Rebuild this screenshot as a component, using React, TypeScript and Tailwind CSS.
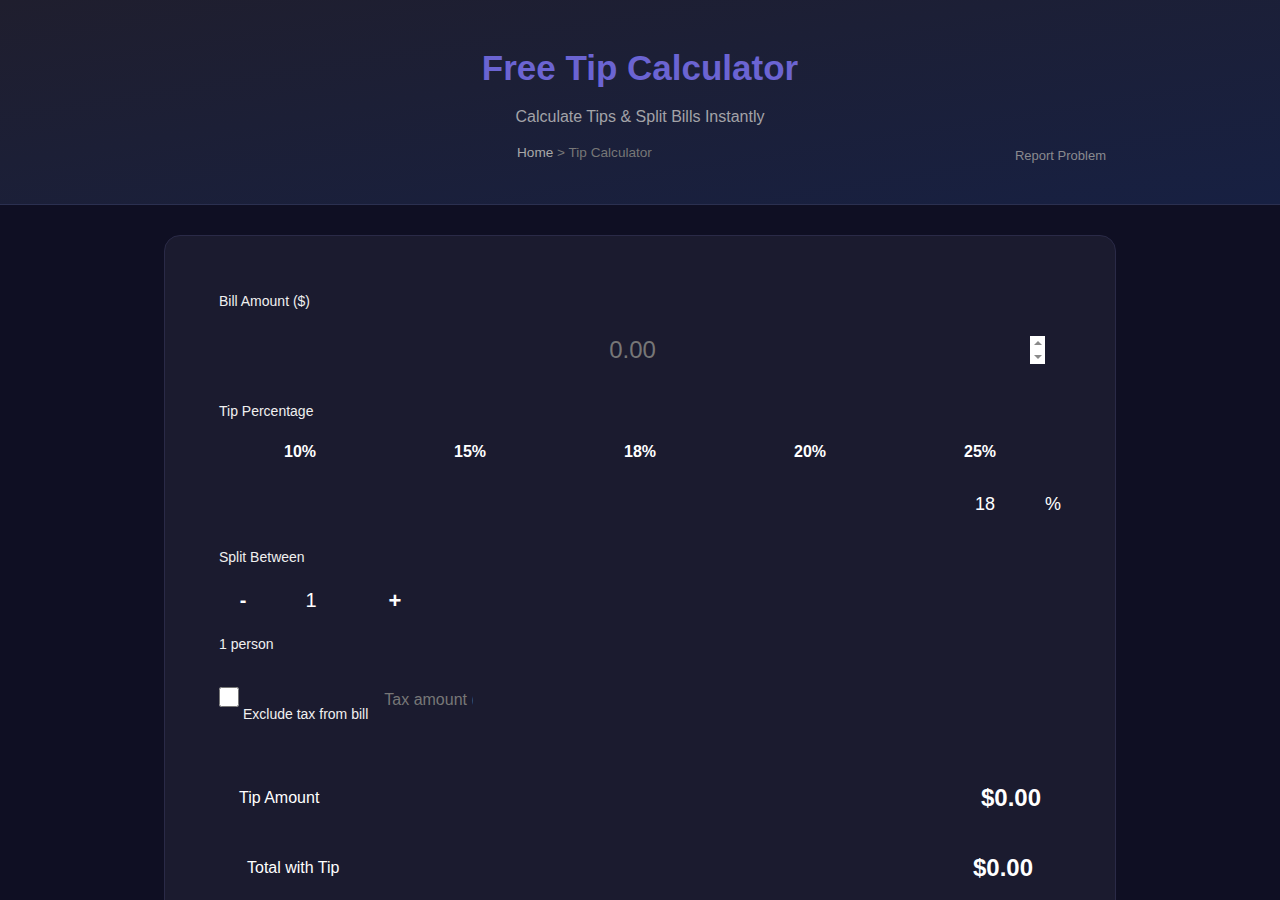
import React from "react";

export default function App() {
  const tips = ["10%", "15%", "18%", "20%", "25%"];
  return (
    <div className="min-h-screen bg-[#0f0f23] font-['Liberation_Sans',Arial,sans-serif] text-white">
      <header className="bg-linear-to-br from-[#1f1e2e] to-[#172042] border-b border-[#2b3050] h-[205px] pt-[46px]">
        <h1 className="text-center text-[35px] leading-[43px] font-bold text-[#6b64d2]">Free Tip Calculator</h1>
        <p className="text-center text-[16px] leading-[24px] text-[#a3a3a8] mt-[16px]">Calculate Tips &amp; Split Bills Instantly</p>
        <div className="flex items-start px-[174px] mt-[14px]">
          <div className="flex-1 pr-[20px] text-center text-[13.6px] leading-[20px] text-[#777]">
            <span className="text-[#a8a8a8]">Home</span> &gt; Tip Calculator
          </div>
          <div className="text-[13px] leading-[20px] text-[#8a8a8f] mt-[3px]">Report Problem</div>
        </div>
      </header>

      <main className="w-[952px] mx-auto mt-[30px] rounded-2xl border border-[#2a2a47] bg-[#1b1b2f] px-[54px] pt-[55px] pb-[40px]">
        <label className="block text-sm leading-5 text-[#f0f0f0]">Bill Amount ($)</label>
        <div className="flex items-center h-[48px] mt-[15px] px-4">
          <input
            type="text"
            placeholder="0.00"
            className="flex-1 min-w-0 bg-transparent text-center text-[24px] text-white placeholder:text-[#777] outline-none border-0 p-0"
          />
          <div className="w-[15px] h-[28px] bg-white flex flex-col items-center justify-center gap-[10px]">
            <svg width="8" height="4" viewBox="0 0 8 4"><path d="M0 4 L4 0 L8 4 Z" fill="#8a8a8a" /></svg>
            <svg width="8" height="4" viewBox="0 0 8 4"><path d="M0 0 L4 4 L8 0 Z" fill="#8a8a8a" /></svg>
          </div>
        </div>

        <label className="block text-sm leading-5 mt-[27px] text-[#f0f0f0]">Tip Percentage</label>
        <div className="grid grid-cols-5 gap-2 mt-[11px]">
          {tips.map((t) => (
            <button key={t} className="h-10 bg-transparent text-[16px] font-bold text-white">{t}</button>
          ))}
        </div>
        <div className="flex justify-end items-center h-10 mt-[12px]">
          <input
            type="text"
            defaultValue="18"
            className="w-[100px] bg-transparent text-center text-[18px] text-white outline-none border-0"
          />
          <span className="text-[18px] ml-[10px] w-[16px] text-center">%</span>
        </div>

        <label className="block text-sm leading-5 mt-[23px] text-[#f0f0f0]">Split Between</label>
        <div className="flex items-center h-10 mt-[13px]">
          <button className="w-12 h-10 bg-transparent text-[20px] font-bold text-white">-</button>
          <input
            type="text"
            defaultValue="1"
            className="w-[64px] ml-[12px] bg-transparent text-center text-[20px] text-white outline-none border-0"
          />
          <button className="w-12 h-10 ml-[28px] bg-transparent text-[22px] font-bold text-white">+</button>
        </div>
        <div className="text-sm leading-5 mt-[14px] text-[#f0f0f0]">1 person</div>

        <div className="flex items-start mt-[33px]">
          <input type="checkbox" className="w-5 h-5 m-0" />
          <span className="text-sm leading-5 ml-1 mt-[17px] text-[#f0f0f0]">Exclude tax from bill</span>
          <input
            type="text"
            placeholder="Tax amount (optional)"
            className="w-[89px] h-6 mt-[1px] ml-[16px] bg-transparent text-[16px] text-white placeholder:text-[#777] outline-none border-0 p-0"
          />
        </div>

        <div className="mt-[39px]">
          <div className="flex items-center justify-between h-[70px] px-5">
            <span className="text-[16px]">Tip Amount</span>
            <span className="text-[24px] font-bold">$0.00</span>
          </div>
          <div className="flex items-center justify-between h-[70px] px-7">
            <span className="text-[16px]">Total with Tip</span>
            <span className="text-[24px] font-bold">$0.00</span>
          </div>
        </div>
      </main>
    </div>
  );
}
